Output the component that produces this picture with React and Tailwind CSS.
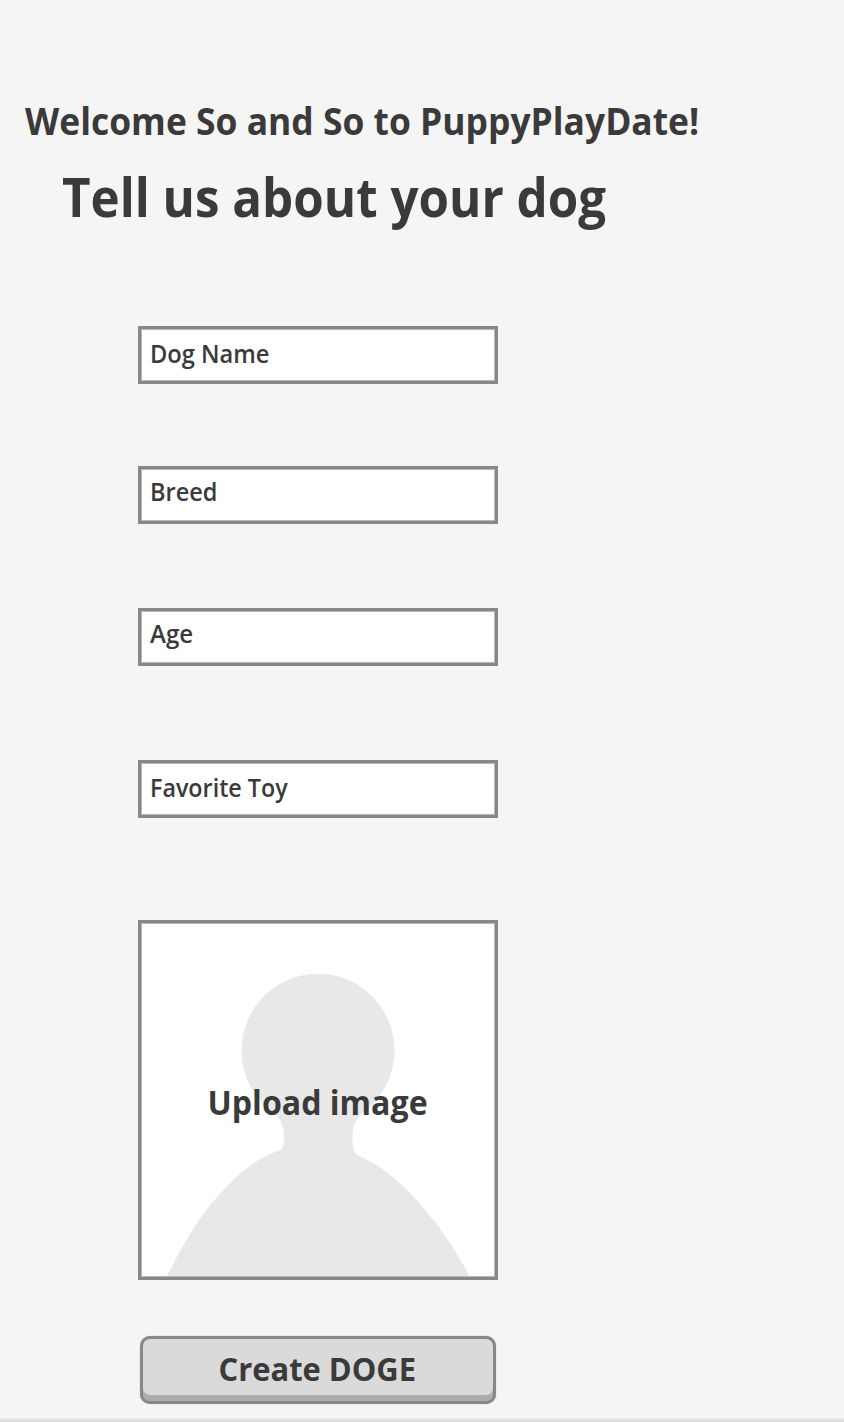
const fields = [
  { label: "Dog Name", box: "mt-[82px]", text: "pb-[4px]", scale: "scale-x-[0.946]" },
  { label: "Breed", box: "mt-[82px]", text: "pb-[8px]", scale: "scale-x-[0.94]" },
  { label: "Age", box: "mt-[84px]", text: "pb-[8px]", scale: "scale-x-[0.965]" },
  { label: "Favorite Toy", box: "mt-[94px]", text: "pb-[4px]", scale: "scale-x-[0.932]" },
];

function Field({ label, box, text, scale }) {
  return (
    <div
      className={`${box} ${text} flex h-[58px] w-[360px] items-center border-3 border-[#888888] bg-white pl-[9px] shadow-[inset_0_0_0_1px_#b8b8b8]`}
    >
      <span className={`${scale} origin-left whitespace-nowrap text-[25px] leading-[34px] font-semibold`}>
        {label}
      </span>
    </div>
  );
}

function Silhouette() {
  return (
    <svg className="col-start-1 row-start-1 h-[352px] w-[352px]" viewBox="4 4 352 352" fill="#e8e8e8">
      <circle cx="180" cy="130.3" r="76.5" />
      <path d="M118 173C124 184 134 189 140 197C145 204 146 209 146 218C146 223 145 229 142 230C125 236 107 247 88.7 266.7C64 291 46 322 29 356H331.5C314 323 294 296 272 273C255 255 238 243 219 235C216 233 214.5 227 214.5 217C214.5 207 217 202 222 195L242 173Z" />
    </svg>
  );
}

export default function App() {
  return (
    <main className="flex h-[1422px] w-[844px] flex-col overflow-hidden bg-[#f5f5f5] font-['Open_Sans',sans-serif] text-[#3a3a3a] antialiased">
      <h1 className="mt-[94px] ml-[25px] w-max origin-left scale-x-[0.932] text-[38px] leading-[52px] font-bold">
        Welcome So and So to PuppyPlayDate!
      </h1>
      <h2 className="mt-[13px] ml-[62px] w-max origin-left scale-x-[0.913] text-[54px] leading-[74px] font-bold">
        Tell us about your dog
      </h2>
      <form className="mt-[11px] ml-[138px] flex w-[360px] flex-col">
        {fields.map((field) => (
          <Field key={field.label} {...field} />
        ))}
        <div className="mt-[102px] grid h-[360px] w-[360px] place-items-center border-3 border-[#888888] bg-white shadow-[inset_0_0_0_1px_#b8b8b8]">
          <Silhouette />
          <span className="z-10 col-start-1 row-start-1 w-max scale-x-[0.944] pt-[4px] text-[34px] leading-[46px] font-bold">
            Upload image
          </span>
        </div>
        <button
          type="button"
          className="mt-[56px] ml-[2px] flex h-[68px] w-[356px] items-center justify-center rounded-[10px] border-3 border-[#888888] bg-[#dadada] pb-[3px] shadow-[inset_0_-6px_0_#adadad,0_0_1px_#888888]"
        >
          <span className="mr-[2px] w-max scale-x-[0.966] text-[32px] leading-[44px] font-bold whitespace-nowrap">
            Create DOGE
          </span>
        </button>
      </form>
      <div className="mt-auto h-[4px] bg-linear-to-b from-[#ebebeb] to-[#dadada]" />
    </main>
  );
}
